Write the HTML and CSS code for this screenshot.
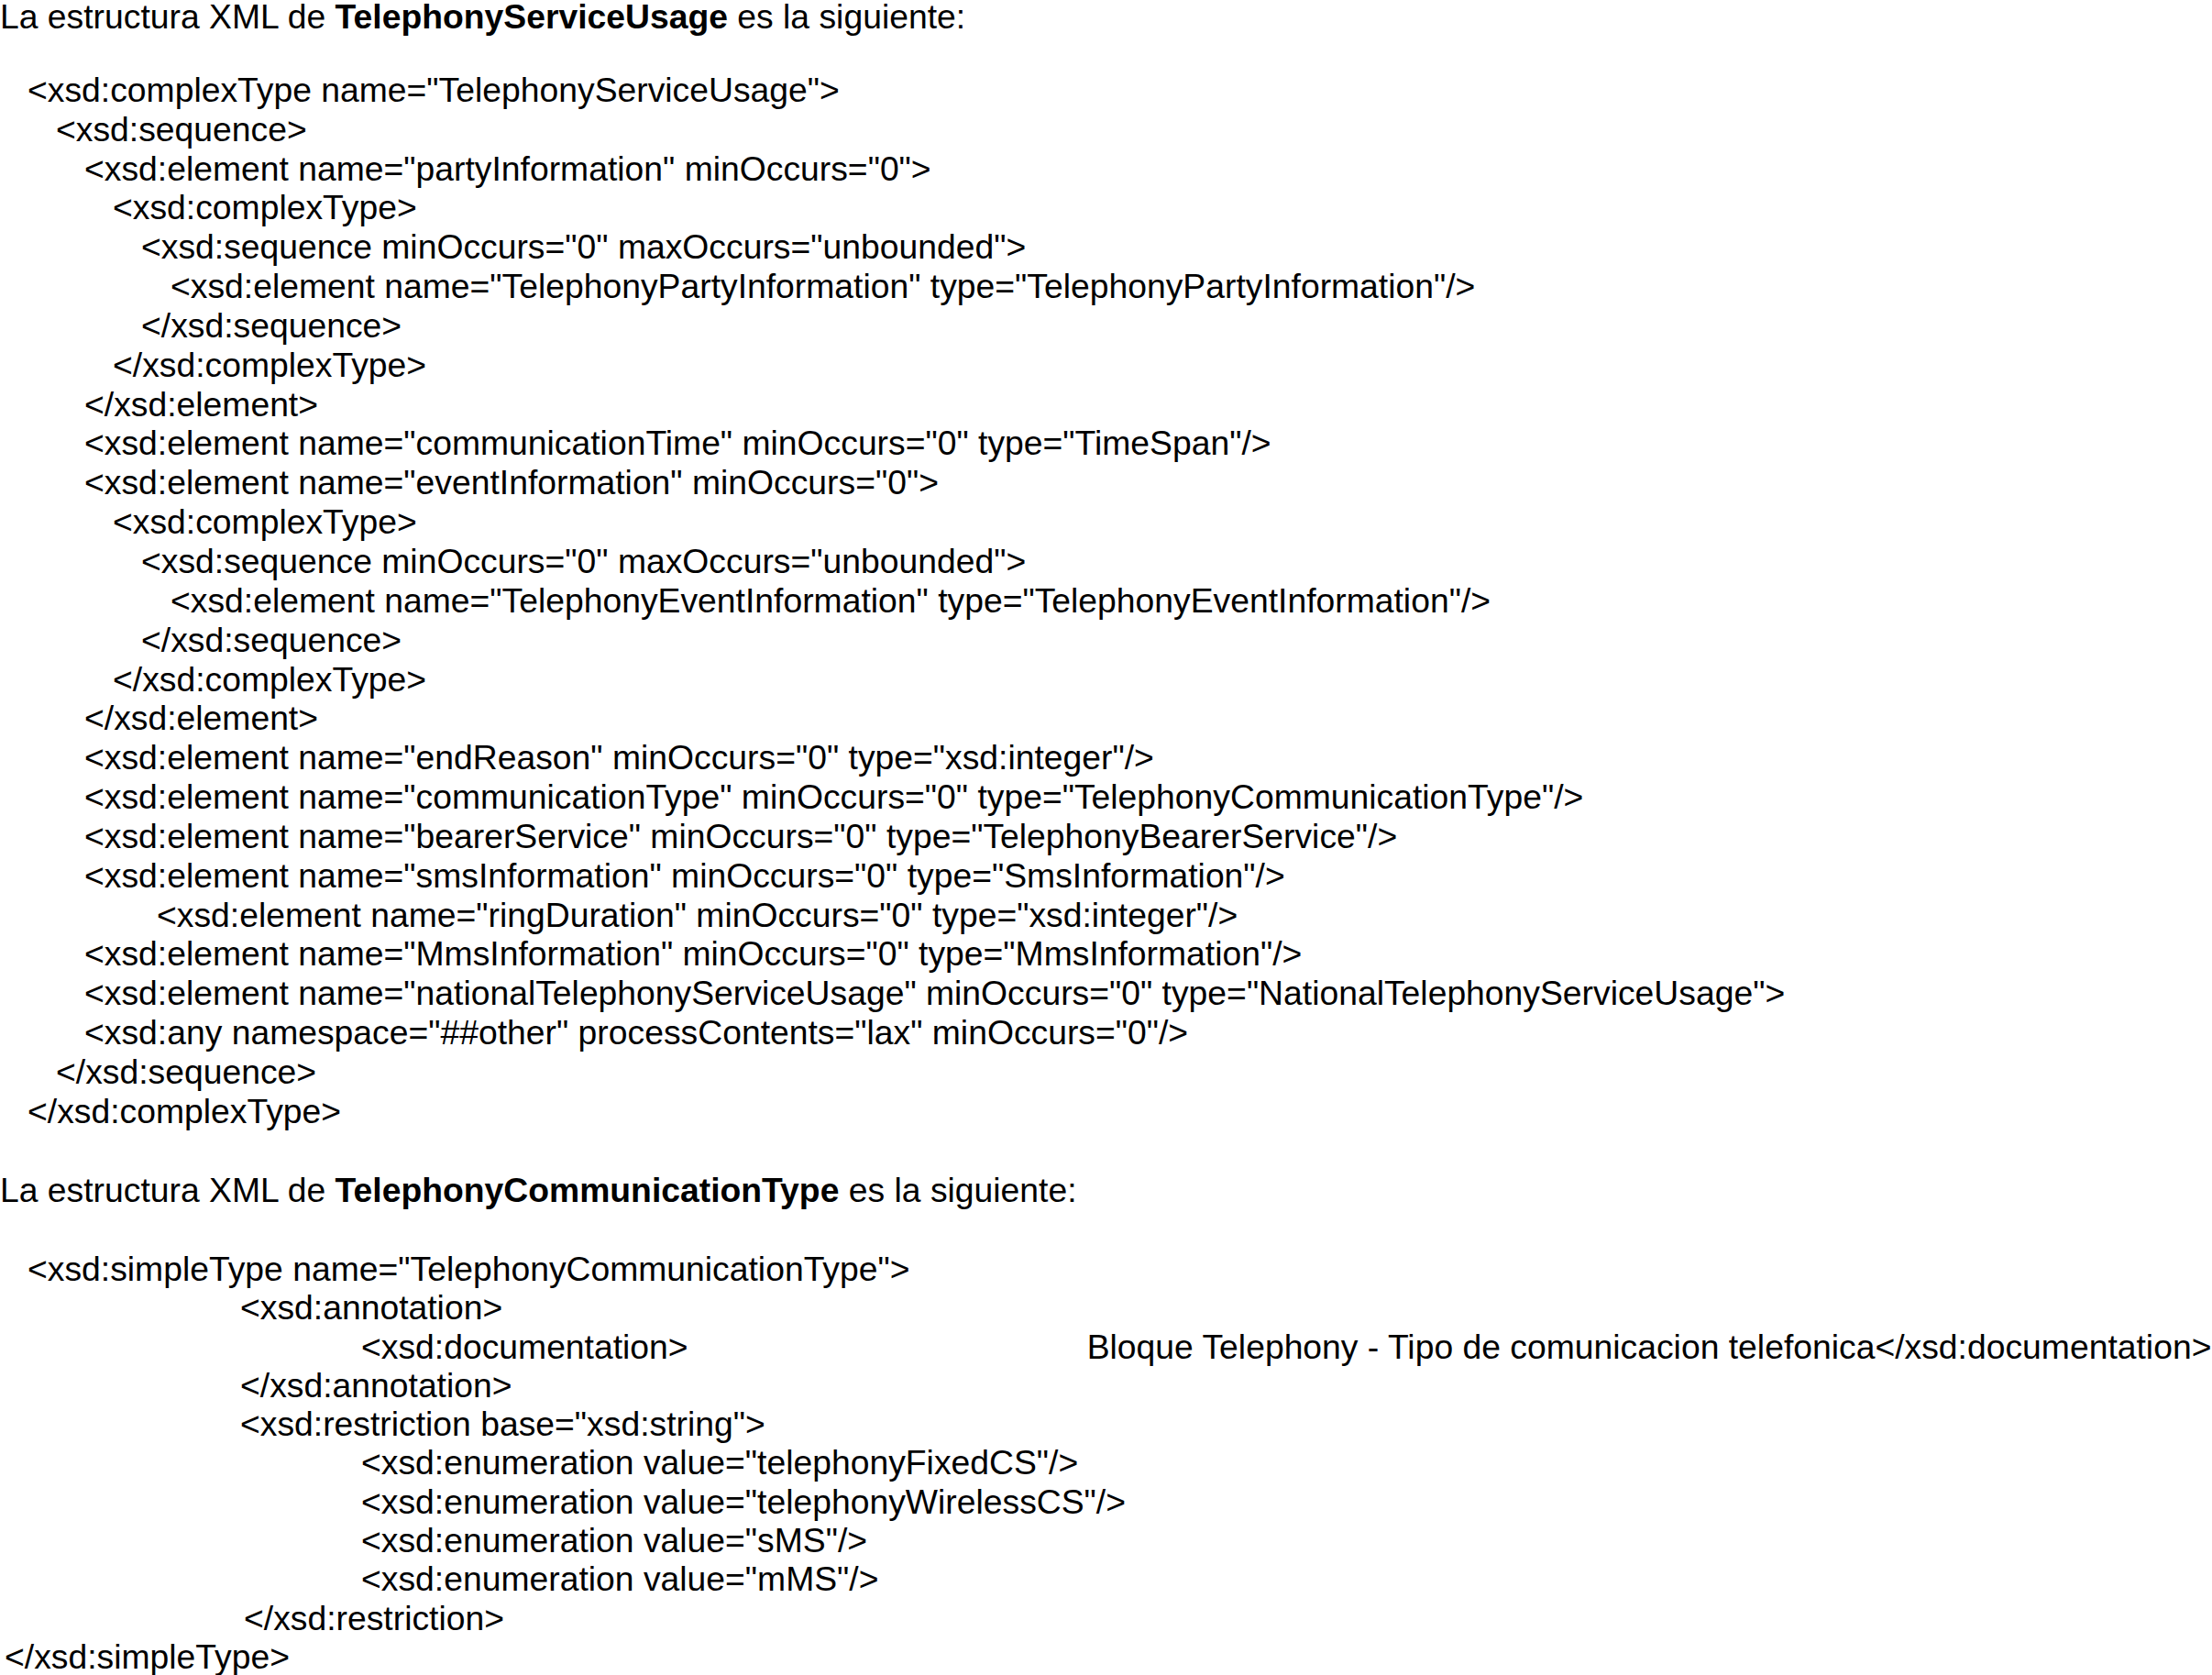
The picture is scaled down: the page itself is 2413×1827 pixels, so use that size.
FILE: index.html
```html
<!DOCTYPE html>
<html lang="es">
<head>
<meta charset="utf-8">
<title>TelephonyServiceUsage</title>
<link rel="stylesheet" href="styles.css">
</head>
<body>
<main class="doc">
  <p class="heading first">La estructura XML de <b>TelephonyServiceUsage</b> es la siguiente:</p>
  <div class="code code-a">
    <div class="ln i1">&lt;xsd:complexType name="TelephonyServiceUsage"&gt;</div>
    <div class="ln i2">&lt;xsd:sequence&gt;</div>
    <div class="ln i3">&lt;xsd:element name="partyInformation" minOccurs="0"&gt;</div>
    <div class="ln i4">&lt;xsd:complexType&gt;</div>
    <div class="ln i5">&lt;xsd:sequence minOccurs="0" maxOccurs="unbounded"&gt;</div>
    <div class="ln i6">&lt;xsd:element name="TelephonyPartyInformation" type="TelephonyPartyInformation"/&gt;</div>
    <div class="ln i5">&lt;/xsd:sequence&gt;</div>
    <div class="ln i4">&lt;/xsd:complexType&gt;</div>
    <div class="ln i3">&lt;/xsd:element&gt;</div>
    <div class="ln i3">&lt;xsd:element name="communicationTime" minOccurs="0" type="TimeSpan"/&gt;</div>
    <div class="ln i3">&lt;xsd:element name="eventInformation" minOccurs="0"&gt;</div>
    <div class="ln i4">&lt;xsd:complexType&gt;</div>
    <div class="ln i5">&lt;xsd:sequence minOccurs="0" maxOccurs="unbounded"&gt;</div>
    <div class="ln i6">&lt;xsd:element name="TelephonyEventInformation" type="TelephonyEventInformation"/&gt;</div>
    <div class="ln i5">&lt;/xsd:sequence&gt;</div>
    <div class="ln i4">&lt;/xsd:complexType&gt;</div>
    <div class="ln i3">&lt;/xsd:element&gt;</div>
    <div class="ln i3">&lt;xsd:element name="endReason" minOccurs="0" type="xsd:integer"/&gt;</div>
    <div class="ln i3">&lt;xsd:element name="communicationType" minOccurs="0" type="TelephonyCommunicationType"/&gt;</div>
    <div class="ln i3">&lt;xsd:element name="bearerService" minOccurs="0" type="TelephonyBearerService"/&gt;</div>
    <div class="ln i3">&lt;xsd:element name="smsInformation" minOccurs="0" type="SmsInformation"/&gt;</div>
    <div class="ln i-ring">&lt;xsd:element name="ringDuration" minOccurs="0" type="xsd:integer"/&gt;</div>
    <div class="ln i3">&lt;xsd:element name="MmsInformation" minOccurs="0" type="MmsInformation"/&gt;</div>
    <div class="ln i3">&lt;xsd:element name="nationalTelephonyServiceUsage" minOccurs="0" type="NationalTelephonyServiceUsage"&gt;</div>
    <div class="ln i3">&lt;xsd:any namespace="##other" processContents="lax" minOccurs="0"/&gt;</div>
    <div class="ln i2">&lt;/xsd:sequence&gt;</div>
    <div class="ln i1">&lt;/xsd:complexType&gt;</div>
  </div>
  <p class="heading second">La estructura XML de <b>TelephonyCommunicationType</b> es la siguiente:</p>
  <div class="code code-b">
    <div class="ln i1">&lt;xsd:simpleType name="TelephonyCommunicationType"&gt;</div>
    <div class="ln t1">&lt;xsd:annotation&gt;</div>
    <div class="ln t2 doc-row"><span>&lt;xsd:documentation&gt;</span><span class="doc-text">Bloque Telephony - Tipo de comunicacion telefonica&lt;/xsd:documentation&gt;</span></div>
    <div class="ln t1">&lt;/xsd:annotation&gt;</div>
    <div class="ln t1">&lt;xsd:restriction base="xsd:string"&gt;</div>
    <div class="ln t2">&lt;xsd:enumeration value="telephonyFixedCS"/&gt;</div>
    <div class="ln t2">&lt;xsd:enumeration value="telephonyWirelessCS"/&gt;</div>
    <div class="ln t2">&lt;xsd:enumeration value="sMS"/&gt;</div>
    <div class="ln t2">&lt;xsd:enumeration value="mMS"/&gt;</div>
    <div class="ln t1b">&lt;/xsd:restriction&gt;</div>
    <div class="ln t0">&lt;/xsd:simpleType&gt;</div>
  </div>
</main>
</body>
</html>
```
FILE: styles.css
```css
html, body {
  margin: 0;
  padding: 0;
  background: #ffffff;
  overflow: hidden;
}

.doc {
  font-family: "Liberation Sans", Arial, sans-serif;
  font-size: 37.3px;
  color: #000000;
  line-height: 42.85px;
  margin-top: -3px;
}

.heading {
  margin: 0;
  padding-left: 0;
  white-space: nowrap;
}

.heading b {
  font-weight: 700;
}

.heading.first {
  margin-bottom: 37px;
}

.heading.second {
  margin-top: 43px;
  margin-bottom: 43.5px;
}

.code-b .ln {
  line-height: 42.3px;
}

.ln {
  display: block;
  white-space: pre;
}

.i1 { padding-left: 30px; }
.i2 { padding-left: 61px; }
.i3 { padding-left: 92px; }
.i4 { padding-left: 123px; }
.i5 { padding-left: 154px; }
.i6 { padding-left: 186px; }
.i-ring { padding-left: 171px; }

.t0 { padding-left: 5px; }
.t1 { padding-left: 262px; }
.t1b { padding-left: 266px; }
.t2 { padding-left: 394px; }

.doc-row .doc-text {
  margin-left: 435px;
}
```
